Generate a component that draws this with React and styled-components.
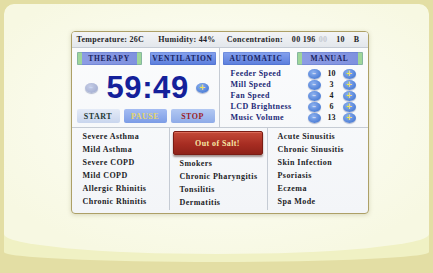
import React from "react";
import styled, { createGlobalStyle } from "styled-components";

const GlobalStyle = createGlobalStyle`
  html, body {
    margin: 0;
    padding: 0;
    width: 433px;
    height: 273px;
    overflow: hidden;
    background: #e3dea4;
  }
  * {
    box-sizing: border-box;
  }
`;

const SERIF = `"Liberation Serif", "DejaVu Serif", serif`;

const Frame = styled.div`
  width: 433px;
  height: 273px;
  padding: 4px 4px 0;
  background: #e3dea4;
`;

// light band that makes the curved bottom edge
const Card = styled.div`
  height: 258px;
  background: #f0f1c4;
  border-radius: 10px 10px 50% 50% / 10px 10px 10px 10px;
  overflow: hidden;
`;

const Face = styled.div`
  height: 250px;
  padding: 27px 0 0 6px;
  display: flex;
  justify-content: center;
  align-items: flex-start;
  border-radius: 10px 10px 50% 50% / 10px 10px 20px 20px;
  background: radial-gradient(
    ellipse 260px 150px at 51% 45%,
    #ffffff 0%,
    #fbfcf0 45%,
    #f7f8e2 100%
  );
`;

const Screen = styled.div`
  width: 298px;
  height: 183px;
  border: 1px solid #ada067;
  border-radius: 4px;
  background: linear-gradient(180deg, #fbfcfd 0%, #f3f5f8 100%);
  box-shadow: 0 1px 4px rgba(120, 110, 60, 0.25);
  display: flex;
  flex-direction: column;
  overflow: hidden;
  font-family: ${SERIF};
  font-weight: bold;
`;

const StatusBar = styled.div`
  height: 16px;
  flex: none;
  display: flex;
  align-items: center;
  padding: 0 8px 0 5px;
  background: linear-gradient(180deg, #f3f4f6 0%, #e3e7ec 100%);
  border-bottom: 1px solid #c5cbd4;
  font-size: 8px;
  letter-spacing: 0.3px;
  color: #1f1f28;
  white-space: nowrap;
`;

const Stat = styled.span`
  margin-left: ${(p) => p.$gap || 0}px;
  color: ${(p) => (p.$dim ? "#c4c8d0" : "inherit")};
`;

const Controls = styled.div`
  height: 80px;
  flex: none;
  display: grid;
  grid-template-columns: 148px 1fr;
  border-bottom: 1px solid #c5cbd4;
`;

const TimerPanel = styled.div`
  border-right: 1px solid #c5cbd4;
  padding: 4px 0 0 5px;
  display: flex;
  flex-direction: column;
`;

const ButtonRow = styled.div`
  display: flex;
  gap: ${(p) => p.$gap || 8}px;
`;

const ModeButton = styled.div`
  width: ${(p) => p.$w}px;
  height: 13px;
  display: flex;
  align-items: center;
  justify-content: center;
  font-size: 7.5px;
  letter-spacing: 0.7px;
  color: #18225e;
  border-radius: 1px;
  background: ${(p) =>
    p.$active
      ? `linear-gradient(90deg, #9fd69a 0, #9fd69a 5px, #8c9ce4 5px, #7f91df calc(100% - 5px), #9fd69a calc(100% - 5px))`
      : `linear-gradient(180deg, #86a2ee 0%, #5a7ddc 100%)`};
  box-shadow: inset 0 0 0 1px rgba(60, 90, 180, 0.25);
`;

const TimerRow = styled.div`
  height: 43px;
  display: flex;
  align-items: center;
  padding-left: 8px;
  margin-top: 1px;
`;

const TimeText = styled.div`
  font-family: "Liberation Sans", "DejaVu Sans", sans-serif;
  font-weight: bold;
  font-size: 31px;
  letter-spacing: 0.6px;
  color: #14209a;
  margin: 0 7px 0 9px;
  line-height: 1;
`;

const Knob = styled.div`
  width: ${(p) => p.$w || 13}px;
  height: 10px;
  flex: none;
  border-radius: 50%;
  display: flex;
  align-items: center;
  justify-content: center;
  font-family: "DejaVu Sans", sans-serif;
  font-size: 8px;
  line-height: 1;
  color: ${(p) => (p.$plus ? "#f2e45a" : "#c8d6f4")};
  background: ${(p) =>
    p.$muted
      ? "radial-gradient(ellipse at 40% 35%, #c6cde6 0%, #9aa6cc 100%)"
      : "radial-gradient(ellipse at 40% 35%, #8fb2f0 0%, #4e7fd6 70%, #3d6cc4 100%)"};
  box-shadow: 0 1px 1px rgba(40, 60, 120, 0.35);
`;

const ActionButton = styled.div`
  width: ${(p) => p.$w}px;
  height: 14px;
  display: flex;
  align-items: center;
  justify-content: center;
  font-size: 8px;
  letter-spacing: 0.5px;
  color: ${(p) => p.$color};
  background: ${(p) => p.$bg};
  border-radius: 2px;
`;

const SettingsPanel = styled.div`
  padding: 4px 0 0 3px;
  display: flex;
  flex-direction: column;
`;

const SettingList = styled.div`
  margin-top: 3px;
  display: flex;
  flex-direction: column;
`;

const SettingRow = styled.div`
  height: 11px;
  display: grid;
  grid-template-columns: 75px 13px 18px 13px;
  column-gap: 2px;
  align-items: center;
  padding-left: 8px;
`;

const SettingLabel = styled.span`
  font-size: 8px;
  letter-spacing: 0.4px;
  color: #1d2a78;
  white-space: nowrap;
`;

const SettingValue = styled.span`
  font-size: 8px;
  text-align: center;
  color: #1a1a22;
`;

const Lists = styled.div`
  flex: 1;
  display: grid;
  grid-template-columns: 98px 98px 1fr;
  padding-bottom: 3px;
`;

const Column = styled.div`
  display: flex;
  flex-direction: column;
  padding: 2px 0 0 ${(p) => p.$pad}px;
  border-right: ${(p) => (p.$last ? "none" : "1px solid #c5cbd4")};
`;

const Item = styled.div`
  height: 13px;
  display: flex;
  align-items: center;
  font-size: 8px;
  letter-spacing: 0.45px;
  color: #1c1c26;
  white-space: nowrap;
`;

const AlarmButton = styled.div`
  width: 90px;
  height: 24px;
  margin: 1px 0 2px -7px;
  display: flex;
  align-items: center;
  justify-content: center;
  font-size: 8px;
  letter-spacing: 0.4px;
  color: #f6e7a6;
  border-radius: 2px;
  background: linear-gradient(180deg, #c44a38 0%, #a72d22 55%, #8f2219 100%);
  border: 1px solid #7a1c14;
  box-shadow: 0 2px 2px rgba(60, 20, 10, 0.45), inset 0 1px 0 rgba(255, 160, 140, 0.4);
`;

const settings = [
  ["Feeder Speed", 10],
  ["Mill Speed", 3],
  ["Fan Speed", 4],
  ["LCD Brightness", 6],
  ["Music Volume", 13],
];

const leftList = [
  "Severe Asthma",
  "Mild Asthma",
  "Severe COPD",
  "Mild COPD",
  "Allergic Rhinitis",
  "Chronic Rhinitis",
];

const midList = ["Smokers", "Chronic Pharyngitis", "Tonsilitis", "Dermatitis"];

const rightList = [
  "Acute Sinusitis",
  "Chronic Sinusitis",
  "Skin Infection",
  "Psoriasis",
  "Eczema",
  "Spa Mode",
];

const blueBtn = "linear-gradient(180deg, #a4bcf2 0%, #7c9ce6 100%)";

const App = () => {
  return (
    <>
      <GlobalStyle />
      <Frame>
        <Card>
          <Face>
            <Screen>
              <StatusBar>
                <Stat>Temperature: 26C</Stat>
                <Stat $gap={14}>Humidity: 44%</Stat>
                <Stat $gap={11}>Concentration:</Stat>
                <Stat $gap={9}>00 196</Stat>
                <Stat $gap={3} $dim>
                  00
                </Stat>
                <Stat style={{ marginLeft: "auto" }}>10</Stat>
                <Stat $gap={9}>B</Stat>
              </StatusBar>

              <Controls>
                <TimerPanel>
                  <ButtonRow>
                    <ModeButton $w={65} $active>
                      THERAPY
                    </ModeButton>
                    <ModeButton $w={66}>VENTILATION</ModeButton>
                  </ButtonRow>
                  <TimerRow>
                    <Knob $muted>–</Knob>
                    <TimeText>59:49</TimeText>
                    <Knob $plus>+</Knob>
                  </TimerRow>
                  <ButtonRow $gap={4}>
                    <ActionButton
                      $w={43}
                      $color="#1f3a36"
                      $bg="linear-gradient(180deg, #e4ebf7 0%, #c9d6ee 100%)"
                    >
                      START
                    </ActionButton>
                    <ActionButton $w={43} $color="#e6d66c" $bg={blueBtn}>
                      PAUSE
                    </ActionButton>
                    <ActionButton
                      $w={44}
                      $color="#9c1e26"
                      $bg="linear-gradient(180deg, #b2c8f2 0%, #8eabe8 100%)"
                    >
                      STOP
                    </ActionButton>
                  </ButtonRow>
                </TimerPanel>

                <SettingsPanel>
                  <ButtonRow $gap={7}>
                    <ModeButton $w={67}>AUTOMATIC</ModeButton>
                    <ModeButton $w={66} $active>
                      MANUAL
                    </ModeButton>
                  </ButtonRow>
                  <SettingList>
                    {settings.map(([label, value]) => (
                      <SettingRow key={label}>
                        <SettingLabel>{label}</SettingLabel>
                        <Knob>–</Knob>
                        <SettingValue>{value}</SettingValue>
                        <Knob $plus>+</Knob>
                      </SettingRow>
                    ))}
                  </SettingList>
                </SettingsPanel>
              </Controls>

              <Lists>
                <Column $pad={11}>
                  {leftList.map((t) => (
                    <Item key={t}>{t}</Item>
                  ))}
                </Column>
                <Column $pad={10}>
                  <AlarmButton>Out of Salt!</AlarmButton>
                  {midList.map((t) => (
                    <Item key={t}>{t}</Item>
                  ))}
                </Column>
                <Column $pad={10} $last>
                  {rightList.map((t) => (
                    <Item key={t}>{t}</Item>
                  ))}
                </Column>
              </Lists>
            </Screen>
          </Face>
        </Card>
      </Frame>
    </>
  );
};

export default App;
